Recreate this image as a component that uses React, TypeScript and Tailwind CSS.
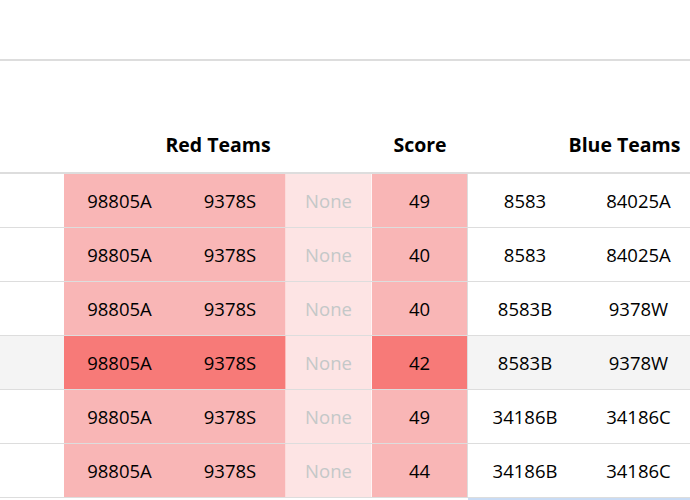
import React from "react"

type Match = {
  red: [string, string]
  score: number
  blue: [string, string]
  highlight?: boolean
}

const MATCHES: Match[] = [
  { red: ["98805A", "9378S"], score: 49, blue: ["8583", "84025A"] },
  { red: ["98805A", "9378S"], score: 40, blue: ["8583", "84025A"] },
  { red: ["98805A", "9378S"], score: 40, blue: ["8583B", "9378W"] },
  { red: ["98805A", "9378S"], score: 42, blue: ["8583B", "9378W"], highlight: true },
  { red: ["98805A", "9378S"], score: 49, blue: ["34186B", "34186C"] },
  { red: ["98805A", "9378S"], score: 44, blue: ["34186B", "34186C"] },
]

function MatchRow({ m }: { m: Match }) {
  const red = m.highlight ? "bg-[#f77a78]" : "bg-[#f9b6b6]"
  const plain = m.highlight ? "bg-[#f4f4f4]" : "bg-white"
  return (
    <div className="flex h-[54px] border-b border-[#dddddd] leading-[26px]">
      <div className={`w-[64px] shrink-0 ${plain}`} />
      <div className={`w-[111px] shrink-0 flex items-center justify-center ${red}`}>{m.red[0]}</div>
      <div className={`w-[111px] shrink-0 flex items-center justify-center border-r border-white/50 ${red}`}>{m.red[1]}</div>
      <div className="w-[86px] shrink-0 flex items-center justify-center border-r border-white/60 bg-[#fde4e4] text-[#c4c8c8]">None</div>
      <div className={`w-[96px] shrink-0 flex items-center justify-center border-r border-[#dddddd] ${red}`}>{m.score}</div>
      <div className={`w-[114px] shrink-0 flex items-center justify-center ${plain}`}>{m.blue[0]}</div>
      <div className={`w-[113px] shrink-0 flex items-center justify-center ${plain}`}>{m.blue[1]}</div>
      <div className={`w-[86px] shrink-0 ${plain}`} />
    </div>
  )
}

export default function App() {
  return (
    <div className="w-[690px] h-[500px] overflow-hidden bg-white text-black text-[18.5px] font-medium font-['Open_Sans',sans-serif]">
      <div className="h-[61px] border-b-2 border-[#dddddd]" />
      <div className="w-[781px]">
        <div className="flex h-[113px] items-end pb-[13px] text-[19.5px] font-bold border-b-2 border-[#dddddd]">
          <div className="w-[64px] shrink-0" />
          <div className="w-[308px] shrink-0 text-center">Red Teams</div>
          <div className="w-[96px] shrink-0 text-center">Score</div>
          <div className="w-[313px] shrink-0 text-center">Blue Teams</div>
        </div>
        {MATCHES.map((m, i) => (
          <MatchRow key={i} m={m} />
        ))}
        <div className="flex h-[54px]">
          <div className="w-[468px] shrink-0" />
          <div className="w-[313px] shrink-0 bg-[#c9dcf5]" />
        </div>
      </div>
    </div>
  )
}
